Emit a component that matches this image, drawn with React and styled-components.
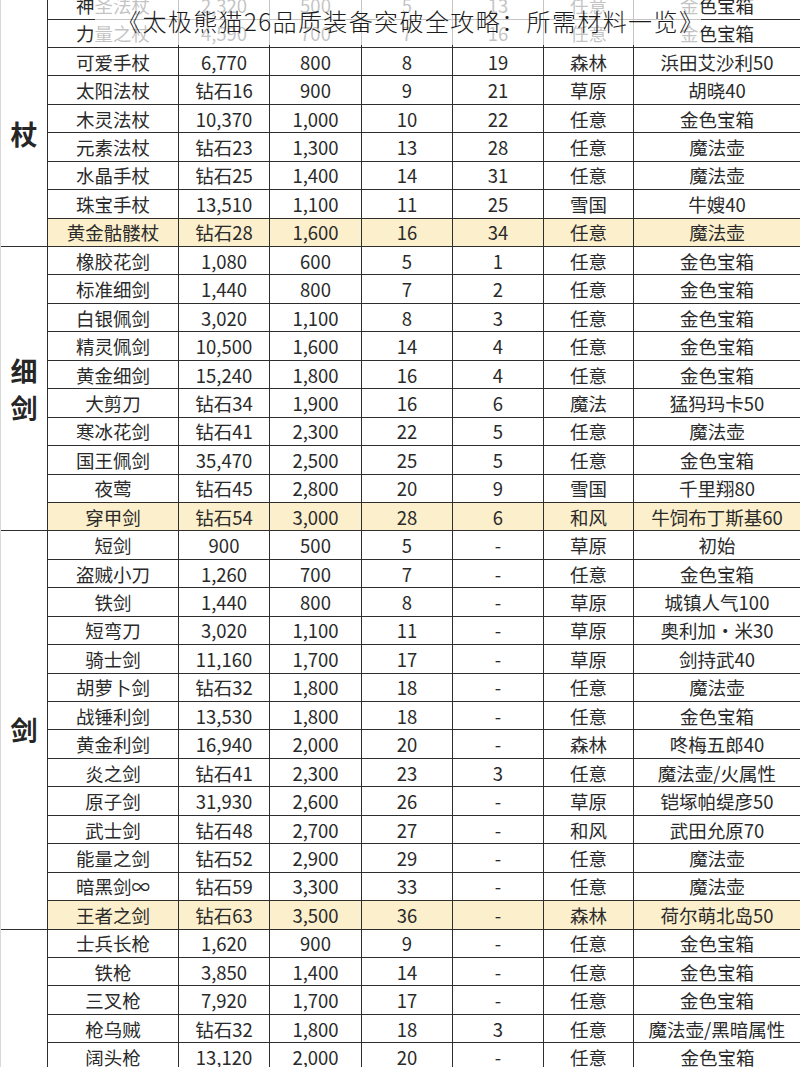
import styled, { createGlobalStyle } from "styled-components";

const GlobalStyle = createGlobalStyle`
  html, body {
    margin: 0;
    padding: 0;
    background: #ffffff;
    overflow: hidden;
  }
  body {
    font-family: "Noto Sans CJK SC", "Noto Sans", sans-serif;
    color: #2a2a2a;
  }
`;

const Page = styled.div`
  position: relative;
  width: 800px;
  height: 1067px;
  overflow: hidden;
`;

const Grid = styled.div`
  display: grid;
  grid-template-columns: 47px 131px 91px 92px 91px 91px 90px 167px;
  grid-auto-rows: 28.45px;
  margin-top: -8.9px;
  border-left: 1px solid #d8d8d8;
`;

const Category = styled.div`
  grid-row: span ${(p) => p.$rows};
  grid-column: 1;
  border-right: 1.5px solid #2e2e2e;
  border-bottom: 1.5px solid #2e2e2e;
  display: flex;
  flex-direction: column;
  align-items: center;
  justify-content: center;
  padding-top: ${(p) => p.$shift || 0}px;
  font-size: 27px;
  font-weight: 700;
  line-height: 37px;
  color: #262626;
`;

const Cell = styled.div`
  border-right: 1.5px solid #2e2e2e;
  border-bottom: 1.5px solid #2e2e2e;
  background: ${(p) => (p.$gold ? "#fcefcc" : "#ffffff")};
  display: flex;
  align-items: center;
  justify-content: center;
  font-size: 18.5px;
  white-space: nowrap;
  overflow: hidden;
  &:last-child {
    border-right: none;
  }
`;

const Fade = styled.div`
  position: absolute;
  left: 95px;
  top: 0;
  width: 606px;
  height: 45px;
  background: rgba(255, 255, 255, 0.72);
`;

const Title = styled.div`
  position: absolute;
  left: 117px;
  top: 4px;
  font-size: 24px;
  font-weight: 300;
  letter-spacing: 1.4px;
  line-height: 34px;
  color: #1c1c1c;
  white-space: nowrap;
`;

const sections = [
  {
    label: "杖",
    shift: 30,
    rows: [
      ["神圣法杖", "2,320", "500", "5", "13", "任意", "金色宝箱"],
      ["力量之杖", "4,590", "700", "7", "16", "任意", "金色宝箱"],
      ["可爱手杖", "6,770", "800", "8", "19", "森林", "浜田艾沙利50"],
      ["太阳法杖", "钻石16", "900", "9", "21", "草原", "胡晓40"],
      ["木灵法杖", "10,370", "1,000", "10", "22", "任意", "金色宝箱"],
      ["元素法杖", "钻石23", "1,300", "13", "28", "任意", "魔法壶"],
      ["水晶手杖", "钻石25", "1,400", "14", "31", "任意", "魔法壶"],
      ["珠宝手杖", "13,510", "1,100", "11", "25", "雪国", "牛嫂40"],
      ["黄金骷髅杖", "钻石28", "1,600", "16", "34", "任意", "魔法壶", true],
    ],
  },
  {
    label: "细剑",
    rows: [
      ["橡胶花剑", "1,080", "600", "5", "1", "任意", "金色宝箱"],
      ["标准细剑", "1,440", "800", "7", "2", "任意", "金色宝箱"],
      ["白银佩剑", "3,020", "1,100", "8", "3", "任意", "金色宝箱"],
      ["精灵佩剑", "10,500", "1,600", "14", "4", "任意", "金色宝箱"],
      ["黄金细剑", "15,240", "1,800", "16", "4", "任意", "金色宝箱"],
      ["大剪刀", "钻石34", "1,900", "16", "6", "魔法", "猛犸玛卡50"],
      ["寒冰花剑", "钻石41", "2,300", "22", "5", "任意", "魔法壶"],
      ["国王佩剑", "35,470", "2,500", "25", "5", "任意", "金色宝箱"],
      ["夜莺", "钻石45", "2,800", "20", "9", "雪国", "千里翔80"],
      ["穿甲剑", "钻石54", "3,000", "28", "6", "和风", "牛饲布丁斯基60", true],
    ],
  },
  {
    label: "剑",
    rows: [
      ["短剑", "900", "500", "5", "-", "草原", "初始"],
      ["盗贼小刀", "1,260", "700", "7", "-", "任意", "金色宝箱"],
      ["铁剑", "1,440", "800", "8", "-", "草原", "城镇人气100"],
      ["短弯刀", "3,020", "1,100", "11", "-", "草原", "奥利加·米30"],
      ["骑士剑", "11,160", "1,700", "17", "-", "草原", "剑持武40"],
      ["胡萝卜剑", "钻石32", "1,800", "18", "-", "任意", "魔法壶"],
      ["战锤利剑", "13,530", "1,800", "18", "-", "任意", "金色宝箱"],
      ["黄金利剑", "16,940", "2,000", "20", "-", "森林", "咚梅五郎40"],
      ["炎之剑", "钻石41", "2,300", "23", "3", "任意", "魔法壶/火属性"],
      ["原子剑", "31,930", "2,600", "26", "-", "草原", "铠塚帕缇彦50"],
      ["武士剑", "钻石48", "2,700", "27", "-", "和风", "武田允原70"],
      ["能量之剑", "钻石52", "2,900", "29", "-", "任意", "魔法壶"],
      ["暗黑剑∞", "钻石59", "3,300", "33", "-", "任意", "魔法壶"],
      ["王者之剑", "钻石63", "3,500", "36", "-", "森林", "荷尔萌北岛50", true],
    ],
  },
  {
    label: "",
    rows: [
      ["士兵长枪", "1,620", "900", "9", "-", "任意", "金色宝箱"],
      ["铁枪", "3,850", "1,400", "14", "-", "任意", "金色宝箱"],
      ["三叉枪", "7,920", "1,700", "17", "-", "任意", "金色宝箱"],
      ["枪乌贼", "钻石32", "1,800", "18", "3", "任意", "魔法壶/黑暗属性"],
      ["阔头枪", "13,120", "2,000", "20", "-", "任意", "金色宝箱"],
    ],
  },
];

export default function App() {
  return (
    <Page>
      <GlobalStyle />
      <Grid>
        {sections.map((sec, si) =>
          sec.rows.map((row, ri) => {
            const gold = row[7];
            return [
              ri === 0 ? (
                <Category key={`c${si}`} $rows={sec.rows.length} $shift={sec.shift}>
                  {sec.label.split("").map((ch, i) => (
                    <span key={i}>{ch}</span>
                  ))}
                </Category>
              ) : null,
              ...row.slice(0, 7).map((v, ci) => (
                <Cell key={`${si}-${ri}-${ci}`} $gold={gold} style={{ gridColumn: ci + 2 }}>
                  {v}
                </Cell>
              )),
            ];
          })
        )}
      </Grid>
      <Fade />
      <Title>《太极熊猫26品质装备突破全攻略：所需材料一览》</Title>
    </Page>
  );
}
